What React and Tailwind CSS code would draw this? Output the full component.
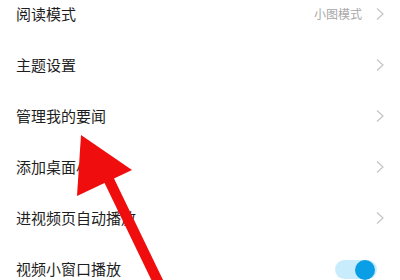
import React from "react";

const Chevron = () => (
  <svg width="10" height="14" viewBox="0 0 10 14" className="shrink-0">
    <path d="M2 1.5 L8 7 L2 12.5" fill="none" stroke="#c4c4c4" strokeWidth="1.2" />
  </svg>
);

const rows = [
  { label: "阅读模式", value: "小图模式" },
  { label: "主题设置" },
  { label: "管理我的要闻" },
  { label: "添加桌面小部件" },
  { label: "进视频页自动播放" },
  { label: "视频小窗口播放", toggle: true },
];

export default function App() {
  return (
    <div
      className="relative w-[400px] h-[280px] overflow-hidden bg-white"
      style={{ fontFamily: '"Noto Sans CJK SC", "Noto Sans", sans-serif' }}
    >
      <div className="flex flex-col -mt-[12px]">
        {rows.map((r, i) => (
          <div key={i} className="h-[51px] flex items-center pl-4 pr-[15px]">
            <span className="text-[15px] leading-none text-[#1e1e1e]">{r.label}</span>
            <div className="flex-1" />
            {r.value && (
              <span className="text-[12px] leading-none text-[#a8a8a8] mr-[13px]">{r.value}</span>
            )}
            {r.toggle ? (
              <div className="relative w-[42px] h-[19px] mt-[2px] rounded-full bg-[#c9ecfc] mr-[8px]">
                <div className="absolute right-[2px] top-[0px] w-[20px] h-[20px] rounded-full bg-[#0a9ee6]" />
              </div>
            ) : (
              <Chevron />
            )}
          </div>
        ))}
      </div>
      <svg className="absolute left-0 top-0" width="400" height="280" viewBox="0 0 400 280">
        <line x1="107" y1="176" x2="163" y2="292" stroke="#f00d0d" strokeWidth="10.5" />
        <polygon points="81,135 77,196 132,170" fill="#f00d0d" />
      </svg>
    </div>
  );
}
